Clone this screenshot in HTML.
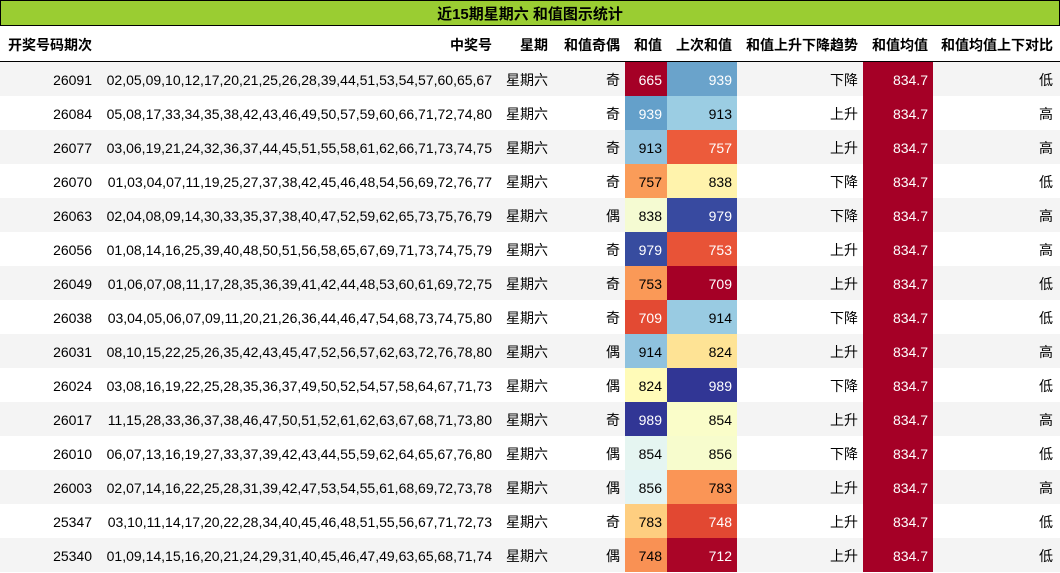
<!DOCTYPE html>
<html><head><meta charset="utf-8"><style>
body{margin:0;background:#fff;font-family:"Liberation Sans","Noto Sans CJK SC",sans-serif;font-size:14px;color:#000;width:1060px;height:573px;overflow:hidden}
.t{height:24px;background:#9acd32;border:1px solid #000;text-align:center;font-weight:bold;font-size:15px;line-height:27px;overflow:hidden}
table{border-collapse:collapse;table-layout:fixed;width:1060px}
td,th{padding:0 5px 0 0;text-align:right;white-space:nowrap;overflow:hidden;height:34px}
td{padding-top:2px;height:32px}
th{height:32px;padding-top:3px;border-bottom:1px solid #000;font-weight:bold}
th.f{text-align:left;padding-left:8px}
tr:nth-child(even) td{background:#f4f4f4}
td.m{background:#a50026!important;color:#fff}
.w{color:#fff}
</style></head><body>
<div class="t">近15期星期六 和值图示统计</div>
<table>
<colgroup><col style="width:97px"><col style="width:400px"><col style="width:56px"><col style="width:72px"><col style="width:42px"><col style="width:70px"><col style="width:126px"><col style="width:70px"><col style="width:127px"></colgroup>
<tr><th class="f">开奖号码期次</th><th>中奖号</th><th>星期</th><th>和值奇偶</th><th>和值</th><th>上次和值</th><th>和值上升下降趋势</th><th>和值均值</th><th style="padding-right:7px">和值均值上下对比</th></tr>
<tr><td>26091</td><td>02,05,09,10,12,17,20,21,25,26,28,39,44,51,53,54,57,60,65,67</td><td>星期六</td><td>奇</td><td class="w" style="background:#a50026">665</td><td class="w" style="background:#6aa3cb">939</td><td>下降</td><td class="m">834.7</td><td style="padding-right:7px">低</td></tr>
<tr><td>26084</td><td>05,08,17,33,34,35,38,42,43,46,49,50,57,59,60,66,71,72,74,80</td><td>星期六</td><td>奇</td><td class="w" style="background:#64a0ca">939</td><td style="background:#9bcde3">913</td><td>上升</td><td class="m">834.7</td><td style="padding-right:7px">高</td></tr>
<tr><td>26077</td><td>03,06,19,21,24,32,36,37,44,45,51,55,58,61,62,66,71,73,74,75</td><td>星期六</td><td>奇</td><td style="background:#8fc2de">913</td><td class="w" style="background:#ec5b3b">757</td><td>上升</td><td class="m">834.7</td><td style="padding-right:7px">高</td></tr>
<tr><td>26070</td><td>01,03,04,07,11,19,25,27,37,38,42,45,46,48,54,56,69,72,76,77</td><td>星期六</td><td>奇</td><td style="background:#fa9c59">757</td><td style="background:#fff3ac">838</td><td>下降</td><td class="m">834.7</td><td style="padding-right:7px">低</td></tr>
<tr><td>26063</td><td>02,04,08,09,14,30,33,35,37,38,40,47,52,59,62,65,73,75,76,79</td><td>星期六</td><td>偶</td><td style="background:#f5fbd2">838</td><td class="w" style="background:#384aa0">979</td><td>下降</td><td class="m">834.7</td><td style="padding-right:7px">高</td></tr>
<tr><td>26056</td><td>01,08,14,16,25,39,40,48,50,51,56,58,65,67,69,71,73,74,75,79</td><td>星期六</td><td>奇</td><td class="w" style="background:#374c9f">979</td><td class="w" style="background:#e85337">753</td><td>上升</td><td class="m">834.7</td><td style="padding-right:7px">高</td></tr>
<tr><td>26049</td><td>01,06,07,08,11,17,28,35,36,39,41,42,44,48,53,60,61,69,72,75</td><td>星期六</td><td>奇</td><td style="background:#fa9957">753</td><td class="w" style="background:#a50026">709</td><td>上升</td><td class="m">834.7</td><td style="padding-right:7px">低</td></tr>
<tr><td>26038</td><td>03,04,05,06,07,09,11,20,21,26,36,44,46,47,54,68,73,74,75,80</td><td>星期六</td><td>奇</td><td class="w" style="background:#e34a33">709</td><td style="background:#99cbe2">914</td><td>下降</td><td class="m">834.7</td><td style="padding-right:7px">低</td></tr>
<tr><td>26031</td><td>08,10,15,22,25,26,35,42,43,45,47,52,56,57,62,63,72,76,78,80</td><td>星期六</td><td>偶</td><td style="background:#8fc2de">914</td><td style="background:#fee395">824</td><td>上升</td><td class="m">834.7</td><td style="padding-right:7px">高</td></tr>
<tr><td>26024</td><td>03,08,16,19,22,25,28,35,36,37,49,50,52,54,57,58,64,67,71,73</td><td>星期六</td><td>偶</td><td style="background:#fffbb8">824</td><td class="w" style="background:#313695">989</td><td>下降</td><td class="m">834.7</td><td style="padding-right:7px">低</td></tr>
<tr><td>26017</td><td>11,15,28,33,36,37,38,46,47,50,51,52,61,62,63,67,68,71,73,80</td><td>星期六</td><td>奇</td><td class="w" style="background:#313695">989</td><td style="background:#fafdc9">854</td><td>上升</td><td class="m">834.7</td><td style="padding-right:7px">高</td></tr>
<tr><td>26010</td><td>06,07,13,16,19,27,33,37,39,42,43,44,55,59,62,64,65,67,76,80</td><td>星期六</td><td>偶</td><td style="background:#e5f5f1">854</td><td style="background:#f7fccd">856</td><td>下降</td><td class="m">834.7</td><td style="padding-right:7px">低</td></tr>
<tr><td>26003</td><td>02,07,14,16,22,25,28,31,39,42,47,53,54,55,61,68,69,72,73,78</td><td>星期六</td><td>偶</td><td style="background:#e3f4f4">856</td><td style="background:#fa9556">783</td><td>上升</td><td class="m">834.7</td><td style="padding-right:7px">高</td></tr>
<tr><td>25347</td><td>03,10,11,14,17,20,22,28,34,40,45,46,48,51,55,56,67,71,72,73</td><td>星期六</td><td>奇</td><td style="background:#fece80">783</td><td class="w" style="background:#e24832">748</td><td>上升</td><td class="m">834.7</td><td style="padding-right:7px">低</td></tr>
<tr><td>25340</td><td>01,09,14,15,16,20,21,24,29,31,40,45,46,47,49,63,65,68,71,74</td><td>星期六</td><td>偶</td><td style="background:#f99154">748</td><td class="w" style="background:#aa0527">712</td><td>上升</td><td class="m">834.7</td><td style="padding-right:7px">低</td></tr>
</table>
</body></html>
